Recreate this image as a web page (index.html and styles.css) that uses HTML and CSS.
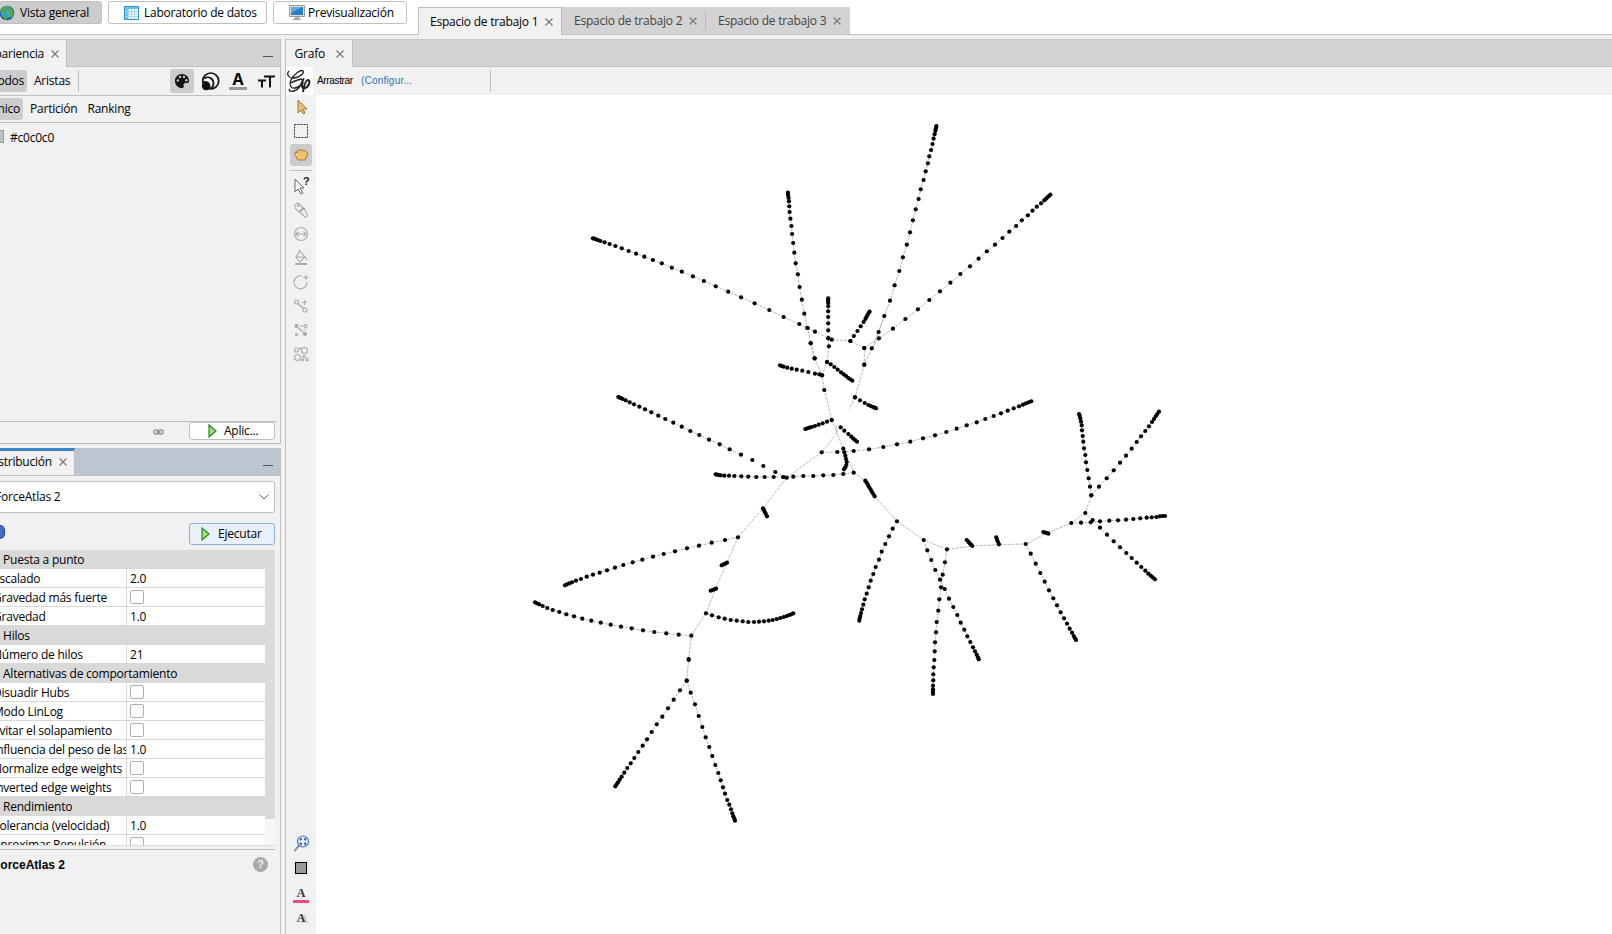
FILE: index.html
```html
<!DOCTYPE html>
<html lang="es">
<head>
<meta charset="utf-8">
<title>Gephi</title>
<link rel="stylesheet" href="styles.css">
</head>
<body>
<div class="app">
  <header class="topbar">
    <div class="modes">
      <div class="mode mode-active"><svg width="16" height="16" viewBox="0 0 16 16"><circle cx="8" cy="8" r="7.3" fill="#1d5f9f"/><circle cx="7.5" cy="7" r="6" fill="#3fa0dc"/><path d="M1 6C3 2 6 1 8 1L9 3 7 5 8 7 5 9 3 8ZM11 2l3 4 1 4-3 3-2-4 1-2-2-2zM6 10l3 2-2 3-3-3z" fill="#58a63f"/></svg><span>Vista general</span></div>
      <div class="mode mode-data"><svg width="15" height="14" viewBox="0 0 15 14"><path d="M.5.5h14v13H.5z" fill="#f4fbff" stroke="#2898c8"/><path d="M1 1h13v2H1zM1 3h3v10H1z" fill="#67c6e8"/><path d="M4.5 3v10M7.5 3v10M10.5 3v10M1 5.5h13M1 8h13M1 10.500h13" stroke="#a9d5e8" fill="none"/></svg><span>Laboratorio de datos</span></div>
      <div class="mode mode-preview"><svg width="16" height="15" viewBox="0 0 16 15"><path d="M.5.5h15v11H.5z" fill="#ddd" stroke="#999"/><path d="M2 2h12v8H2z" fill="#2680cb"/><path d="M2 2h11L2 8z" fill="#61a9df"/><path d="M6 12h4v1.500h2V15H4v-1.500h2z" fill="#aaa"/></svg><span>Previsualización</span></div>
    </div>
    <div class="spaces">
      <div class="space space-active"><span>Espacio de trabajo 1</span><svg class="x" viewBox="0 0 8 8"><path d="M.5.5l7 7M7.500.5l-7 7"/></svg></div>
      <div class="space"><span>Espacio de trabajo 2</span><svg class="x" viewBox="0 0 8 8"><path d="M.5.5l7 7M7.500.5l-7 7"/></svg></div>
      <div class="space space-last"><span>Espacio de trabajo 3</span><svg class="x" viewBox="0 0 8 8"><path d="M.5.5l7 7M7.500.5l-7 7"/></svg></div>
    </div>
    <div class="topfill"></div>
  </header>
  <main class="main">
    <aside class="left">
      <section class="appearance">
        <div class="strip"><div class="tab tab-look"><span>Apariencia</span><svg class="x" viewBox="0 0 8 8"><path d="M.5.5l7 7M7.500.5l-7 7"/></svg></div><i class="minimize"></i></div>
        <div class="row row-element">
          <span class="chip chip-nodes">Nodos</span><span class="plain">Aristas</span><i class="vline"></i>
          <div class="look-icons">
            <span class="look look-active"><svg width="16" height="16" viewBox="0 0 16 16"><path d="M8 1C4 1 1 4 1 7.700 1 12 4 15 8 15c1.500 0 2-.8 1.700-2-.5-2 .3-3 2-3H13c1.500 0 2-1 2-2.300C15 4 12 1 8 1z" fill="#111"/><g fill="#ccc"><circle cx="3.800" cy="7.500" r="1.200"/><circle cx="6" cy="4" r="1.200"/><circle cx="10" cy="4" r="1.200"/><circle cx="12.500" cy="7.300" r="1.200"/></g></svg></span>
            <span class="look"><svg width="19" height="19" viewBox="0 0 19 19" fill="none" stroke="#111"><circle cx="9.700" cy="9" r="8" stroke-width="1.700"/><path d="M3.500 6.500c4-3 9 0 9 5 0 2-1 4-3 5" stroke-width="1.700"/><circle cx="5" cy="14" r="4.200" fill="#111" stroke="none"/><path d="M2.500 10c4-1 7 2 6 6" stroke-width="1.500"/></svg></span>
            <span class="look look-a">A</span>
            <span class="look"><svg width="17" height="14" viewBox="0 0 17 14" fill="none" stroke="#111" stroke-width="2"><path d="M6 2.500h11M12 2v11.500M0 6.500h8M4 6v7.500"/></svg></span>
          </div>
        </div>
        <div class="row row-method"><span class="chip chip-unique">Único</span><span class="plain">Partición</span><span class="plain ranking">Ranking</span></div>
        <div class="unique"><i class="swatch"></i><span>#c0c0c0</span></div>
        <div class="applybar"><svg class="chain" width="11" height="6" viewBox="0 0 11 6" fill="none" stroke="#888" stroke-width="1.200"><rect x=".7" y=".8" width="5" height="4.300" rx="2"/><rect x="5.200" y=".8" width="5" height="4.300" rx="2"/><path d="M3 3h5"/></svg><div class="btn btn-apply"><svg class="play" viewBox="0 0 9 14"><path d="M1 1l7 6-7 6z"/></svg><span>Aplic...</span></div></div>
      </section>
      <section class="layout">
        <div class="strip strip-on"><div class="tab tab-layout"><span>Distribución</span><svg class="x" viewBox="0 0 8 8"><path d="M.5.5l7 7M7.500.5l-7 7"/></svg></div><i class="minimize"></i></div>
        <div class="combo"><span>ForceAtlas 2</span><svg width="10" height="6" viewBox="0 0 10 6"><path d="M.5.5L5 5 9.500.5" fill="none" stroke="#666"/></svg></div>
        <div class="runbar"><i class="info"></i><div class="btn btn-run"><svg class="play" viewBox="0 0 9 14"><path d="M1 1l7 6-7 6z"/></svg><span>Ejecutar</span></div></div>
        <div class="sheet">
          <div class="props">
            <div class="head">Puesta a punto</div>
            <div class="prop"><span>Escalado</span><b>2.0</b></div>
            <div class="prop"><span>Gravedad más fuerte</span><i></i></div>
            <div class="prop"><span>Gravedad</span><b>1.0</b></div>
            <div class="head">Hilos</div>
            <div class="prop"><span>Número de hilos</span><b>21</b></div>
            <div class="head">Alternativas de comportamiento</div>
            <div class="prop"><span>Disuadir Hubs</span><i></i></div>
            <div class="prop"><span>Modo LinLog</span><i></i></div>
            <div class="prop"><span>Evitar el solapamiento</span><i></i></div>
            <div class="prop"><span>Influencia del peso de las</span><b>1.0</b></div>
            <div class="prop"><span>Normalize edge weights</span><i></i></div>
            <div class="prop"><span>Inverted edge weights</span><i></i></div>
            <div class="head">Rendimiento</div>
            <div class="prop"><span>Tolerancia (velocidad)</span><b>1.0</b></div>
            <div class="prop"><span>Aproximar Repulsión</span><i></i></div>
          </div>
          <div class="track"><div class="thumb"></div></div>
        </div>
        <div class="desc"><strong>ForceAtlas 2</strong><span class="help">?</span></div>
      </section>
    </aside>
    <section class="graph">
      <div class="strip"><div class="tab tab-graph"><span>Grafo</span><svg class="x" viewBox="0 0 8 8"><path d="M.5.5l7 7M7.500.5l-7 7"/></svg></div></div>
      <div class="graphbar">
        <svg class="logo" width="27" height="28" viewBox="0 0 27 28" fill="none" stroke="#222"><path d="M3 4C0 7 3 12 8 11c6-1 11-5 9-7-2-2-9 3-12 9-2 5 0 9 4 8 5-1 8-6 9-10M5 16c3-2 6-3 11-4M17 12c-2 6-4 11-9 12-4 1-6-1-4-2" stroke-width="1.300"/><path d="M17 15c-2 4-1 7 2 6 4-1 6-8 3-8-2 0-4 6-5 12" stroke-width="2"/></svg>
        <span class="drag">Arrastrar</span><span class="config">(Configur...</span><i class="barline"></i>
      </div>
      <div class="work">
        <div class="tools">
          <svg class="tool" viewBox="0 0 22 24"><path d="M8 5v13l3-3 2 4 2-1-2-4h4z" fill="#e8c372" stroke="#98773a"/></svg>
          <svg class="tool" viewBox="0 0 22 24"><rect x="4.500" y="5.500" width="13" height="13" fill="none" stroke="#333" stroke-dasharray="2 1"/></svg>
          <svg class="tool tool-on" viewBox="0 0 22 22"><path d="M5 10c0-3 2-3 2-1 0-4 3-4 3-2 1-2 3-1 3 0 2-1 3 0 3 1 2 0 2 2 1 4l-2 4H8L5 11z" fill="#efc46c" stroke="#a37a2c"/></svg>
          <i class="rule"></i>
          <svg class="tool" viewBox="0 0 22 24"><path d="M5 5v13l3-3 3 5 2-1-3-5h4z" fill="#fff" stroke="#666"/><text x="13" y="11" class="quest">?</text></svg>
          <svg class="tool gray" viewBox="0 0 22 24"><path d="M5 7l3-2 5 5-4 4-4-4zM10 14l4-4 3 6c1 3-1 4-3 2z"/><path d="M7 9l3-3"/></svg>
          <svg class="tool gray" viewBox="0 0 22 24"><circle cx="11" cy="12" r="6.500"/><path d="M5 12h12M8.500 9.500L6 12l2.500 2.500M13.500 9.500L16 12l-2.500 2.500"/></svg>
          <svg class="tool gray" viewBox="0 0 22 24"><path d="M10 5l5 6-5 5-4-5zM9 7V4M6.500 11H15l2 3"/><path d="M5 18h12" stroke-width="2"/></svg>
          <svg class="tool gray" viewBox="0 0 22 24"><path d="M12 6a6.500 6.500 0 1 0 5 6M13.500 7.500h5M16 5v5"/></svg>
          <svg class="tool gray" viewBox="0 0 22 24"><circle cx="6.500" cy="8" r="2"/><circle cx="15" cy="16" r="2"/><path d="M8 9.500l5.500 5M12 8.500h5M14.500 6v5"/></svg>
          <svg class="tool gray" viewBox="0 0 22 24"><circle cx="6.500" cy="8" r="1.500" fill="#aaa"/><circle cx="15" cy="16" r="1.500" fill="#aaa"/><circle cx="15.500" cy="8" r="1.500"/><circle cx="6.500" cy="16.500" r="1"/><path d="M8 9.500l5.500 5M10 8h3M15 10.500v2"/></svg>
          <svg class="tool gray" viewBox="0 0 22 24"><circle cx="6.500" cy="8" r="2"/><circle cx="14.500" cy="8.500" r="3"/><circle cx="7.500" cy="15.500" r="3"/><circle cx="14" cy="14.500" r="1.300"/><circle cx="17" cy="17.500" r="1.300"/><circle cx="12.500" cy="18" r="1"/><circle cx="10.500" cy="6.500" r=".6"/></svg>
          <span class="grow"></span>
          <svg class="tool" viewBox="0 0 22 24"><path d="M4.500 19l5-6" stroke="#999" stroke-width="2"/><circle cx="13" cy="9.500" r="5.500" fill="#eaf2ff" stroke="#4a70bd" stroke-width="1.200"/><path d="M10.500 8.500V7H12M14 7h1.500v1.500M15.500 10.500V12H14M12 12h-1.500v-1.500" fill="none" stroke="#1947b5" stroke-width="1.300"/></svg>
          <svg class="tool tool-bg" viewBox="0 0 22 24"><rect x="5.500" y="6.500" width="11" height="11" fill="#999" stroke="#000"/></svg>
          <span class="letter letter-color">A</span>
          <span class="letter letter-shade">A</span>
        </div>
        <svg class="canvas" viewBox="316 95 1296 839"><path id="edges"/><g id="nodes"></g></svg>
      </div>
    </section>
  </main>
</div>
<script src="graph.js"></script>
</body>
</html>
```
FILE: styles.css
```css
* { box-sizing: border-box; }
body { margin: 0; font: 12px/16px "Open Sans", "Noto Sans", sans-serif; letter-spacing: -0.22px; color: #000; background: #f1f1f1; overflow: hidden; }
.app { width: 1612px; height: 934px; display: flex; flex-direction: column; white-space: nowrap; }
svg { flex: none; }
.topbar { height: 35px; display: flex; background: #fff; flex: none; }
.modes { width: 418px; border-bottom: 1px solid #c0c0c0; display: flex; align-items: flex-start; padding-top: 1px; gap: 6px; }
.mode { height: 23px; border: 1px solid #c0c0c0; border-radius: 3px; display: flex; align-items: center; gap: 5px; }
.mode-active { width: 102px; background: #ccc; border-left: 0; border-radius: 0 3px 3px 0; margin-left: 0; }
.mode-active svg { margin-left: -1px; }
.mode-data { width: 159px; padding-left: 15px; }
.mode-preview { width: 134px; padding-left: 15px; gap: 3px; }
.spaces { display: flex; padding-top: 7px; }
.space { width: 144px; height: 28px; background: #d3d3d3; border-bottom: 1px solid #c0c0c0; color: #444; display: flex; align-items: center; padding-left: 12px; position: relative; }
.space span { width: 115px; }
.space-active { background: #f1f1f1; color: #000; border: 1px solid #c0c0c0; border-bottom: 0; padding-left: 11px; }
.space-last { border-left: 0; }
.space-last::before { content: ""; position: absolute; left: -1px; top: 4px; height: 19px; width: 1px; background: #bbb; }
.x { width: 8px; height: 8px; fill: none; stroke: #777; stroke-width: 1.1; }
.topfill { flex: 1; border-bottom: 1px solid #c0c0c0; }
.main { flex: 1; display: flex; padding-top: 4px; gap: 4px; min-height: 0; }
.left { width: 281px; display: flex; flex-direction: column; gap: 4px; }
.appearance { height: 405px; border-right: 1px solid #c0c0c0; border-bottom: 1px solid #b8b8b8; display: flex; flex-direction: column; }
.strip { height: 28px; flex: none; background: #d3d3d3; border-bottom: 1px solid #c0c0c0; display: flex; justify-content: space-between; border-top: 1px solid #c8c8c8; }
.tab { background: #f1f1f1; height: 27px; border-right: 1px solid #c0c0c0; display: flex; align-items: center; justify-content: flex-end; gap: 7px; padding-right: 7px; }
.tab-look { width: 67px; }
.tab-graph { width: 67px; gap: 11px; padding-right: 8px; }
.minimize { width: 10px; height: 1px; background: #555; align-self: flex-end; margin: 0 7px 9px 0; }
.row { height: 29px; flex: none; border-bottom: 1px solid #c0c0c0; display: flex; align-items: center; }
.row-method { height: 27px; }
.chip { background: #ccc; height: 22px; line-height: 22px; border-radius: 0 3px 3px 0; display: flex; justify-content: flex-end; padding-right: 3px; }
.chip-nodes { width: 27px; }
.chip-unique { width: 23px; }
.plain { margin-left: 7px; }
.ranking { margin-left: 10px; }
.vline { width: 1px; height: 22px; background: #c0c0c0; margin-left: 8px; }
.look-icons { display: flex; margin-left: auto; gap: 4px; padding-right: 2px; }
.look { width: 24px; height: 24px; border-radius: 3px; display: flex; align-items: center; justify-content: center; }
.look-active { background: #ccc; }
.look-a { font: bold 16px/15px "Open Sans", sans-serif; width: 18px; height: 19px; margin: 2px 3px; border-radius: 0; border-bottom: 3px solid #999; }
.unique { flex: 1; display: flex; align-items: flex-start; padding-top: 7px; gap: 6px; }
.swatch { width: 4px; height: 13px; background: #c0c0c0; border: 1px solid #999; border-left: 0; }
.applybar { height: 22px; margin-right: 3px; border-top: 1px solid #c0c0c0; display: flex; justify-content: flex-end; padding-right: 2px; }
.chain { margin: 7px 25px 0 0; }
.btn { width: 86px; border: 1px solid #c0c0c0; border-radius: 3px; background: #fff; display: flex; align-items: center; }
.btn-apply { height: 18px; padding-left: 18px; gap: 7px; }
.btn-run { height: 22px; background: #e8f1fb; border-color: #8bb0d8; padding-left: 11px; gap: 8px; }
.play { width: 9px; height: 14px; fill: #a6dc7b; stroke: #218a21; stroke-width: 1.2; }
.layout { flex: 1; display: flex; flex-direction: column; border-right: 1px solid #c0c0c0; }
.strip-on { background: #bcc6d0; border-top: 0; }
.tab-layout { width: 75px; border-top: 3px solid #3984c8; padding-bottom: 2px; }
.combo { margin: 5px 5px 0 0; height: 32px; background: #fff; border: 1px solid #c0c0c0; border-left: 0; border-radius: 0 3px 3px 0; display: flex; justify-content: space-between; align-items: center; padding-right: 5px; text-indent: -5px; }
.runbar { margin: 10px 5px 0 0; height: 22px; display: flex; justify-content: space-between; }
.info { width: 5px; height: 14px; margin-top: 2px; border-radius: 0 7px 7px 0; background: #3f6cc4; border: 1px solid #244b9a; border-left: 0; }
.sheet { margin: 5px 5px 0 0; height: 296px; border-bottom: 1px solid #ddd; overflow: hidden; display: flex; flex: none; }
.props { width: 265px; background: #fff; }
.head { height: 19px; line-height: 20px; background: #d9d9d9; padding-left: 3px; }
.prop { height: 19px; border-bottom: 1px solid #d9d9d9; display: flex; }
.prop span { width: 127px; border-right: 1px solid #d9d9d9; text-indent: -7px; line-height: 20px; overflow: hidden; }
.prop b { font-weight: 400; padding-left: 3px; line-height: 19px; }
.prop i { width: 14px; height: 14px; border: 1px solid #b0b0b0; border-radius: 2px; margin: 2px 0 0 3px; }
.track { width: 10px; background: #f6f6f6; }
.thumb { height: 269px; background: #dbdbdb; }
.desc { margin: 3px 5px 0 0; border-top: 1px solid #c0c0c0; display: flex; justify-content: space-between; padding: 7px 7px 0 0; letter-spacing: 0; }
.desc strong { font: bold 12px/16px "Liberation Sans", Arial, sans-serif; text-indent: -7px; }
.help { width: 15px; height: 15px; border-radius: 50%; background: #aaa; color: #eee; font: bold 11px/15px "Liberation Sans", sans-serif; text-align: center; }
.graph { flex: 1; border-left: 1px solid #c0c0c0; display: flex; flex-direction: column; }
.graphbar { height: 28px; flex: none; display: flex; align-items: center; font: 10px/14px "Liberation Sans", Arial, sans-serif; letter-spacing: -0.35px; }
.logo { background: #fff; }
.drag { margin-left: 4px; width: 44px; }
.config { color: #2c73b8; letter-spacing: .2px; width: 129px; }
.barline { width: 1px; height: 22px; background: #c0c0c0; }
.work { flex: 1; display: flex; min-height: 0; }
.tools { width: 30px; display: flex; flex-direction: column; align-items: center; padding-bottom: 9px; }
.tool { width: 22px; height: 24px; }
.tool-on { background: #ccc; border-radius: 3px; height: 22px; margin-top: 1px; }
.rule { width: 22px; height: 1px; background: #c0c0c0; margin: 4px 0 3px; }
.gray { fill: none; stroke: #aaa; stroke-width: 1.1; }
.quest { font: bold 11px "Liberation Sans", sans-serif; fill: #222; }
.grow { flex: 1; }
.letter { font: bold 12px/14px "Liberation Serif", serif; color: #333; width: 16px; text-align: center; }
.letter-color { border-bottom: 3px solid #f4477c; margin-top: 6px; height: 17px; }
.letter-shade { margin-top: 8px; text-shadow: 3px 1px 0 #ccc; }
.canvas { width: 1296px; height: 839px; background: #fff; }
#edges { fill: none; stroke: #a8a8a8; stroke-width: .8; stroke-dasharray: 3 1; }
#nodes { fill: #000; }
```
FILE: graph.js
```js
// Chains of nodes, grouped by region: origin (x, y), units per pixel, chains.
// A chain that starts with "-" draws only its edges, one with "." only its nodes.
const regions = [
  [520, 110, 2.8, 3, [
    '204,385 208,386 213,388 218,390 225,393 237,397 251,402 267,408 285,415 304,423 325,431 348,440 372,450 397,460 425,473 453,485 484,499 515,513 548,529 583,545 619,562 657,580 698,600 738,621 782,642 805,654 826,665 864,685 873,689 925,693 964,714 964,764',
    '750,248 750,252 751,257 752,264 753,274 754,289 755,306 757,326 760,348 762,372 765,399 768,428 772,460 778,493 783,531 789,569 796,611 805,654 814,699 825,745',
    '863,565 863,569 863,573 863,579 863,589 863,604 863,621 863,640 863,661 863,685 865,709 860,756',
    '979,605 976,609 973,615 970,621 967,627 962,636 954,649 945,663 935,678 925,693',
    '1166,48 1165,52 1164,57 1163,63 1161,73 1158,86 1155,102 1151,120 1146,139 1142,160 1136,184 1130,210 1122,238 1116,267 1108,298 1100,331 1092,367 1083,404 1072,442 1062,483 1049,526 1036,572 1020,618 1004,666 985,715',
    '-1020,618 1004,666 1005,685 985,715 964,764',
    '1485,254 1481,258 1477,262 1473,266 1468,271 1459,280 1447,290 1435,302 1422,316 1405,331 1389,348 1370,365 1351,384 1330,404 1307,424 1284,446 1260,469 1233,492 1205,518 1176,544 1146,570 1114,598 1079,627 1044,656 1005,685 964,714'
  ]],
  [720, 290, 3, 3, [
    '272,160 284,205 306,256 313,300 335,390',
    '-335,390 370,476 402,548',
    '.180,226 185,228 191,230 202,233 215,236 230,239 247,242 265,246 285,251 298,253 306,256',
    '-306,256 321,216',
    '.321,216 332,223 343,231 353,239 363,247 371,253 378,258 385,264 391,268 397,272',
    '433,224 405,322', '-405,322 388,356',
    '.405,322 420,331 434,339 445,345 452,348 459,351 464,353 468,355',
    '.256,417 262,415 268,413 275,411 285,408 296,404 308,400 321,395 335,390',
    '.362,412 373,422 385,432 394,440 400,446 405,450 411,455',
    '.370,476 373,487 376,497 378,507 380,516 379,525 376,532 372,538', '-350,405 350,430 305,488'
  ]],
  [520, 380, 3, 3, [
    '295,51 299,53 303,54 308,57 317,61 329,67 342,73 358,80 375,88 394,97 415,107 436,117 460,128 485,140 511,153 538,165 567,179 599,193 629,208', '.663,224 697,240 730,258 766,276 790,291',
    '-629,208 663,224', '-766,276 800,293',
    '587,283 591,284 596,285 602,286 613,287 627,287 643,288 664,289 685,290 709,291 734,291 761,291 790,291 800,293 820,290 850,288 880,288 910,286 940,285 970,282 1001,278',
    '-905,217 800,293 729,385 654,472 622,545 586,628 558,700 514,767 506,838 500,902',
    '.729,385 731,389 734,395 737,401 741,409',
    '654,472 615,480 575,488 537,497 501,505 465,514 431,522 399,530 367,539 338,547 310,555 285,563 261,571 239,578 219,584 200,590 183,597 168,602 156,607 148,610 141,613 135,616',
    '.605,556 611,553 616,551 621,548', '.572,632 578,630 583,628 588,626',
    '558,700 576,706 596,712 614,716 632,720 650,722 668,724 685,726 702,726 717,725 732,724 746,722 758,720 770,717 781,714 791,711 800,708 808,705 814,703 820,700',
    '514,767 476,764 439,760 403,756 369,751 335,745 303,740 272,734 242,728 214,722 187,716 162,709 139,703 118,696 98,690 82,684 68,678 58,673 51,670 45,667',
    '.506,837 506,840',
    '500,902 480,931 461,959 444,985 427,1010 410,1033 395,1056 381,1078 368,1097 355,1116 343,1134 332,1150 322,1164 313,1178 305,1190 299,1199 294,1207 290,1213 286,1219',
    '500,902 512,938 525,973 536,1008 547,1041 557,1072 568,1101 577,1128 586,1155 595,1179 602,1201 609,1222 615,1241 622,1260 628,1274 633,1288 637,1300 640,1309 643,1316 645,1322'
  ]],
  [820, 380, 3, 3, [
    '5,217 52,216 101,213 147,208 190,201 231,193 271,185 309,175 345,166 379,156 410,146 440,136 470,127 496,117 521,108 543,100 563,92 581,85 597,79 609,74 618,70 626,67 634,64',
    '-101,278 136,302', '-164,349 231,424 311,480 381,508 457,498 537,494 617,492 676,462 754,429 796,399 814,346',
    '.136,302 140,308 144,315 148,322 152,329 156,336 160,342 164,349',
    '231,424 218,446 207,469 196,492 185,515 177,539 167,561 160,582 152,602 146,622 140,641 134,658 130,674 126,688 123,699 121,708 119,715 118,722',
    '311,480 322,511 334,540 346,570 360,599 374,627 387,656 400,681 412,705 422,728 433,749 442,769 451,786 459,802 465,814 470,824 474,832 476,838',
    '381,508 375,547 368,584 363,622 358,658 355,692 350,726 348,757 345,787 344,814 343,840 341,862 340,883 340,901 339,917 339,928 339,935 339,942',
    '.440,480 445,485 449,490 453,494 457,498', '.529,472 531,479 534,486 537,493',
    '617,492 632,521 647,551 661,579 674,605 687,631 700,655 711,676 722,697 732,715 741,731 749,746 756,758 761,768 765,775 768,780',
    '.670,456 676,458 681,459 685,461',
    '754,429 783,428 812,427 840,424 868,422 894,421 918,419 940,417 961,415 980,413 995,412 1009,411 1019,409 1027,408 1035,408',
    '796,399 818,420 840,443 861,464 881,484 900,502 919,519 935,534 950,548 964,561 976,572 985,581 992,587 998,592 1005,598',
    '777,102 779,107 781,115 783,125 785,136 786,151 788,168 790,185 792,205 796,225 798,247 802,270 806,295 810,320 814,346',
    '1017,95 1012,102 1007,109 1002,117 996,126 987,139 976,153 963,169 950,186 935,206 918,227 900,248 881,271 860,295 837,320 814,346'
  ]]
];
let edges = '';
let nodes = '';
for (const [ox, oy, sx, sy, chains] of regions) {
  for (const chain of chains) {
    const pts = chain.replace(/^[-.]/, '').split(' ').map(p => {
      const [x, y] = p.split(',').map(Number);
      return [(ox + x / sx).toFixed(1), (oy + y / sy).toFixed(1)];
    });
    if (chain[0] !== '.') edges += 'M' + pts.map(p => p.join(' ')).join('L');
    if (chain[0] !== '-') nodes += pts.map(([x, y]) => `<circle cx="${x}" cy="${y}" r="2.1"/>`).join('');
  }
}
document.getElementById('edges').setAttribute('d', edges);
document.getElementById('nodes').innerHTML = nodes;
```
